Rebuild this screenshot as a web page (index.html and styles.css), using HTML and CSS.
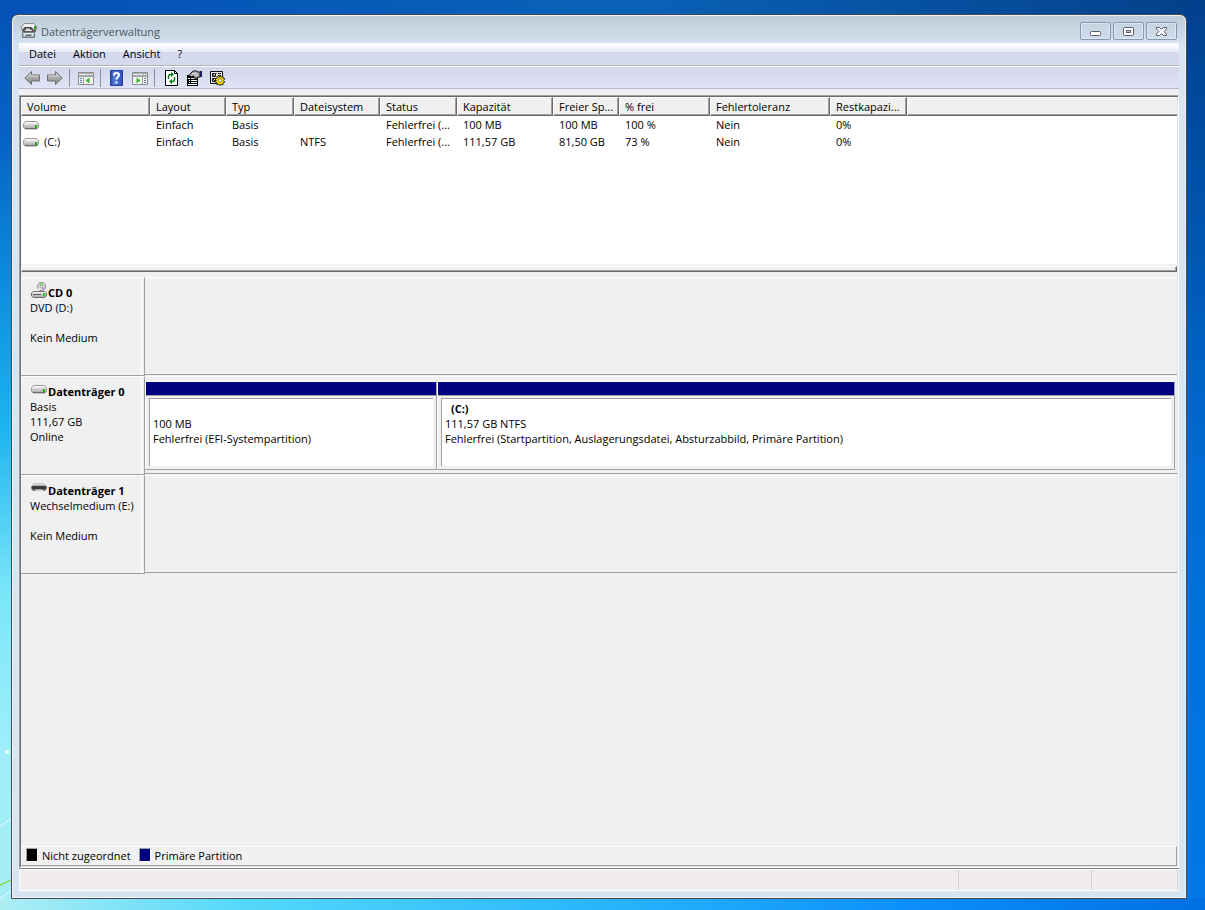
FILE: index.html
```html
<!DOCTYPE html>
<html lang="de">
<head>
    <meta charset="UTF-8">
    <meta name="viewport" content="width=device-width, initial-scale=1.0">
    <title>Datenträgerverwaltung</title>
    <link rel="stylesheet" href="styles.css">
</head>
<body>
    <svg class="defs" aria-hidden="true">
        <defs>
            <linearGradient id="metal" x1="0" y1="0" x2="0" y2="1">
                <stop offset="0" stop-color="#fafafa"/>
                <stop offset="1" stop-color="#a4a4a4"/>
            </linearGradient>
            <linearGradient id="arrow" x1="0" y1="0" x2="0" y2="1">
                <stop offset="0" stop-color="#c4c4c4"/>
                <stop offset="1" stop-color="#8c8c8c"/>
            </linearGradient>
            <linearGradient id="help" x1="0" y1="0" x2="1" y2="0">
                <stop offset="0" stop-color="#24409c"/>
                <stop offset=".3" stop-color="#5a7ed8"/>
                <stop offset="1" stop-color="#2c50bc"/>
            </linearGradient>
            <symbol id="drive" viewBox="0 0 16 16">
                <path d="M2.500 4.500h11l2 2v4l-2 1.500h-11l-2-1.500v-4z" fill="url(#metal)" stroke="#999"/>
                <path d="M3 5h10l1.500 1.500h-13z" fill="#f4f4f4"/>
                <path d="M2 11.500h12" stroke="#6c6c6c"/>
                <path d="M12 8h2v3h-2z" fill="#2aa822"/>
            </symbol>
            <symbol id="cd" viewBox="0 0 16 16">
                <circle cx="10.500" cy="4.500" r="4.200" fill="#d0d0d0" stroke="#8a8a8a" stroke-width=".8"/>
                <path d="M10.500 4.500l-2-4h3z" fill="#7cc878"/>
                <path d="M10.500 4.500l4 2-3 2z" fill="#b8a4d0"/>
                <path d="M10.500 4.500l-3.500 2 1.500 2z" fill="#f6f6f6"/>
                <circle cx="10.500" cy="4.500" r="1.200" fill="#fff" stroke="#777" stroke-width=".6"/>
                <path d="M2.500 9.500h11l2 1.500v3l-2 1.500h-11l-2-1.500v-3z" fill="url(#metal)" stroke="#6e6e6e"/>
                <path d="M2 12.500h8" stroke="#555"/>
                <path d="M12 11h2v3h-2z" fill="#2fc024"/>
            </symbol>
            <symbol id="removable" viewBox="0 0 16 16">
                <path d="M3 3.500h10l3 3v2.500l-2 2h-2l-1-2h-6l-1 2h-2l-2-2v-2.500z" fill="#8b8b8b"/>
                <path d="M3 3.500h10l2 2h-14z" fill="#d6d6d6"/>
                <path d="M2 6h12l1.500 1.500-1 2h-13l-1-2z" fill="#3a3a3a"/>
                <path d="M4 10.500l1-1.500h6l1 1.500z" fill="#a8a8a8"/>
            </symbol>
            <symbol id="app" viewBox="0 0 16 16">
                <path d="M2.500 1.500l1-1h9l2 1.500 1 2v2.500h-15v-2.500z" fill="#eee" stroke="#8a8a8a"/>
                <path d="M2 5.500l2-1.500h6l2 1.500v1h-10z" fill="#444"/>
                <path d="M5 5.500h4v1.500h-4z" fill="#ddd"/>
                <path d="M13 3h2v3h-2z" fill="#23a81e"/>
                <path d="M1 7h14v1l-1 1h-12l-1-1z" fill="#5a5a5a"/>
                <path d="M4 7.500h7" stroke="#d8d8d8"/>
                <path d="M1.500 9.500h12v5h-12z" fill="#a4b0b4" stroke="#707c80"/>
                <path d="M2 10.500h11M3.500 10v3M11.500 10v3" stroke="#e4eaec"/>
                <path d="M5 12.500h5" stroke="#566064"/>
            </symbol>
            <symbol id="left" viewBox="0 0 16 16">
                <path d="M.8 8l6.700-6.500v3.500h8v6h-8v3.500z" fill="url(#arrow)" stroke="#6e6e6e"/>
                <path d="M2.500 8l4-4v2h8" fill="none" stroke="#d4d4d4"/>
            </symbol>
            <symbol id="right" viewBox="0 0 16 16">
                <path d="M15.200 8l-6.700-6.500v3.500h-8v6h8v3.500z" fill="url(#arrow)" stroke="#6e6e6e"/>
                <path d="M1.500 6h8v-2l4 4" fill="none" stroke="#d4d4d4"/>
            </symbol>
            <symbol id="tree" viewBox="0 0 16 16">
                <path d="M.5 2.500h15v12h-15z" fill="#f4f4f4" stroke="#8c8c8c"/>
                <path d="M1 3h14v3h-14z" fill="#a9aeb4"/>
                <path d="M1 4.500h10" stroke="#e4e6e8"/>
                <path d="M12 4.500h1M14 4.500h1" stroke="#fff"/>
                <path d="M5.500 6v8M1 6.500h14" stroke="#a0a0a0"/>
                <path d="M2 8.500h2M2 10.500h2M2 12.500h2" stroke="#5b7ea8"/>
                <path d="M11.500 7.500v6l-4-3z" fill="#3cb428"/>
            </symbol>
            <symbol id="actions" viewBox="0 0 16 16">
                <path d="M.5 2.500h15v12h-15z" fill="#f4f4f4" stroke="#8c8c8c"/>
                <path d="M1 3h14v3h-14z" fill="#a9aeb4"/>
                <path d="M1 4.500h10" stroke="#e4e6e8"/>
                <path d="M12 4.500h1M14 4.500h1" stroke="#fff"/>
                <path d="M10.500 6v8M1 6.500h14" stroke="#a0a0a0"/>
                <path d="M12 8.500h2M12 10.500h2M12 12.500h2" stroke="#5b7ea8"/>
                <path d="M4.500 7.500v6l4-3z" fill="#3cb428"/>
            </symbol>
            <symbol id="question" viewBox="0 0 16 16">
                <path d="M1.500 .5h12v15h-12z" fill="url(#help)" stroke="#24409c"/>
                <path d="M5 5.500v-1q0-1.500 2.500-1.500t2.500 2c0 2-2.500 2-2.500 4.500" fill="none" stroke="#fff" stroke-width="2"/>
                <path d="M6.500 11.500h2v2h-2z" fill="#fff"/>
            </symbol>
            <symbol id="refresh" viewBox="0 0 16 16">
                <path d="M2.500 .5h9l3 3v12h-12z" fill="#fff" stroke="#000"/>
                <path d="M11.500 .5v3h3" fill="none" stroke="#000"/>
                <path d="M5.500 9v-3l1-1.500h2M11.500 7v3l-1 1.500h-2" fill="none" stroke="#0a7d14" stroke-width="1.500"/>
                <path d="M8 2l3 2.500-3 2.500zM9 9l-3 2.500 3 2.500z" fill="#0a7d14"/>
            </symbol>
            <symbol id="properties" viewBox="0 0 16 16">
                <path d="M1 5h11v11h-11z" fill="#000"/>
                <path d="M2 8.500h2M5 8.500h6M3 10.500h1M5 10.500h6M3 12.500h1M5 12.500h6M2 14.500h9" stroke="#fff"/>
                <path d="M3 5.500l3-3.500 1.500-1h3l1.500 1h2v5h-2l-2 1.500-2-.5v-2l-3 1z" fill="#a8a8a8" stroke="#111"/>
                <path d="M6 3.500h5M8 5.500h4" stroke="#d8d8d8"/>
                <path d="M14 1h2v6h-2z" fill="#17205c"/>
            </symbol>
            <symbol id="settings" viewBox="0 0 16 16">
                <path d="M1.500 1.500h12v12h-12z" fill="#e8e8e8" stroke="#111"/>
                <path d="M3.500 3.500h3v3h-3zM3.500 8.500h3v3h-3z" fill="#fff" stroke="#111"/>
                <path d="M4 4l1.500 2 2-3M4 9l1.500 2 2-3" fill="none" stroke="#111"/>
                <path d="M9 3.500h3M9 5.500h3" stroke="#111"/>
                <path d="M11 5.500l1 2 2-1.500v2.500h2l-1.500 2 1.500 1.500-2 .5v2.500l-2-1-1 1.700-1-1.700-2 1v-2.500l-2.200-.5 1.500-1.500-1.500-2h2.200v-2.500l2 1.500z" fill="#ffe800" stroke="#1a1600" stroke-width=".8"/>
                <circle cx="11" cy="10.500" r="1.700" fill="#fff" stroke="#6c5c00" stroke-width=".8"/>
            </symbol>
        </defs>
    </svg>

    <div class="window">
        <header class="titlebar">
            <svg class="icon"><use href="#app"/></svg>
            <h1 class="title">Datenträgerverwaltung</h1>
            <div class="caption">
                <button type="button" class="caption-btn" aria-label="Minimieren">
                    <svg viewBox="0 0 13 11"><rect x="1.500" y="5.500" width="10" height="4" rx="1" fill="#fff" stroke="#5a5f70"/></svg>
                </button>
                <button type="button" class="caption-btn" aria-label="Maximieren">
                    <svg viewBox="0 0 13 11"><rect x="1.500" y="1.500" width="10" height="8" rx="1" fill="#fff" stroke="#5a5f70"/><rect x="4.500" y="4.500" width="4" height="2" fill="#c3d0e0" stroke="#5a5f70"/></svg>
                </button>
                <button type="button" class="caption-btn" aria-label="Schließen">
                    <svg viewBox="0 0 13 11"><path d="M1.500 1.500h3l2 2 2-2h3v1.500l-2.500 2.500 2.500 2.500v1.500h-3l-2-2-2 2h-3v-1.500l2.500-2.500-2.500-2.500z" fill="#fff" stroke="#5a5f70"/></svg>
                </button>
            </div>
        </header>

        <nav class="menubar">
            <button type="button">Datei</button>
            <button type="button">Aktion</button>
            <button type="button">Ansicht</button>
            <button type="button">?</button>
        </nav>

        <div class="toolbar">
            <button type="button" aria-label="Zurück"><svg class="icon"><use href="#left"/></svg></button>
            <button type="button" aria-label="Vorwärts"><svg class="icon"><use href="#right"/></svg></button>
            <span class="separator"></span>
            <button type="button" aria-label="Konsolenstruktur"><svg class="icon"><use href="#tree"/></svg></button>
            <span class="separator"></span>
            <button type="button" aria-label="Hilfe"><svg class="icon"><use href="#question"/></svg></button>
            <button type="button" aria-label="Aktionsbereich"><svg class="icon"><use href="#actions"/></svg></button>
            <span class="separator"></span>
            <button type="button" aria-label="Aktualisieren"><svg class="icon"><use href="#refresh"/></svg></button>
            <button type="button" aria-label="Eigenschaften"><svg class="icon"><use href="#properties"/></svg></button>
            <button type="button" aria-label="Einstellungen"><svg class="icon"><use href="#settings"/></svg></button>
        </div>

        <main class="pane">
            <div class="volume-list">
                <table class="volumes">
                    <colgroup>
                        <col class="col-volume">
                        <col class="col-layout">
                        <col class="col-type">
                        <col class="col-fs">
                        <col class="col-status">
                        <col class="col-capacity">
                        <col class="col-free">
                        <col class="col-percent">
                        <col class="col-fault">
                        <col class="col-rest">
                        <col>
                    </colgroup>
                    <thead>
                        <tr>
                            <th>Volume</th>
                            <th>Layout</th>
                            <th>Typ</th>
                            <th>Dateisystem</th>
                            <th>Status</th>
                            <th>Kapazität</th>
                            <th>Freier Sp...</th>
                            <th>% frei</th>
                            <th>Fehlertoleranz</th>
                            <th>Restkapazi...</th>
                            <th></th>
                        </tr>
                    </thead>
                    <tbody>
                        <tr>
                            <td><span class="volume"><svg class="icon"><use href="#drive"/></svg></span></td>
                            <td>Einfach</td>
                            <td>Basis</td>
                            <td></td>
                            <td>Fehlerfrei (...</td>
                            <td>100 MB</td>
                            <td>100 MB</td>
                            <td>100 %</td>
                            <td>Nein</td>
                            <td>0%</td>
                            <td></td>
                        </tr>
                        <tr>
                            <td><span class="volume"><svg class="icon"><use href="#drive"/></svg>(C:)</span></td>
                            <td>Einfach</td>
                            <td>Basis</td>
                            <td>NTFS</td>
                            <td>Fehlerfrei (...</td>
                            <td>111,57 GB</td>
                            <td>81,50 GB</td>
                            <td>73 %</td>
                            <td>Nein</td>
                            <td>0%</td>
                            <td></td>
                        </tr>
                    </tbody>
                </table>
            </div>
            <div class="splitter"></div>

            <div class="disks">
                <section class="disk">
                    <div class="disk-label">
                        <h2><svg class="icon"><use href="#cd"/></svg>CD 0</h2>
                        <p>DVD (D:)</p>
                        <p></p>
                        <p>Kein Medium</p>
                    </div>
                    <div class="disk-map"></div>
                </section>
                <section class="disk">
                    <div class="disk-label">
                        <h2><svg class="icon"><use href="#drive"/></svg>Datenträger 0</h2>
                        <p>Basis</p>
                        <p>111,67 GB</p>
                        <p>Online</p>
                    </div>
                    <div class="disk-map">
                        <div class="partition">
                            <div class="stripe"></div>
                            <div class="partition-body">
                                <h3></h3>
                                <p>100 MB</p>
                                <p>Fehlerfrei (EFI-Systempartition)</p>
                            </div>
                        </div>
                        <div class="partition">
                            <div class="stripe"></div>
                            <div class="partition-body">
                                <h3>(C:)</h3>
                                <p>111,57 GB NTFS</p>
                                <p>Fehlerfrei (Startpartition, Auslagerungsdatei, Absturzabbild, Primäre Partition)</p>
                            </div>
                        </div>
                    </div>
                </section>
                <section class="disk">
                    <div class="disk-label">
                        <h2><svg class="icon"><use href="#removable"/></svg>Datenträger 1</h2>
                        <p>Wechselmedium (E:)</p>
                        <p></p>
                        <p>Kein Medium</p>
                    </div>
                    <div class="disk-map"></div>
                </section>
            </div>

            <div class="legend">
                <span class="legend-item"><i class="swatch unallocated"></i>Nicht zugeordnet</span>
                <span class="legend-item"><i class="swatch primary"></i>Primäre Partition</span>
            </div>
        </main>

        <footer class="statusbar">
            <span></span>
            <span></span>
            <span></span>
        </footer>
    </div>
</body>
</html>
```
FILE: styles.css
```css
* {
    margin: 0;
    padding: 0;
    box-sizing: border-box;
}

body {
    height: 100vh;
    padding: 14px 18px 11px 11px;
    display: flex;
    font-family: "Segoe UI", "Open Sans", "Noto Sans", sans-serif;
    font-size: 11px;
    line-height: 15px;
    color: #000;
    overflow: hidden;
    /* green blade and light streaks, bottom glow, left glow, base */
    background:
        linear-gradient(155deg, transparent 48%, #8fd84a 49%, #8fd84a 54%, transparent 55%) 0 872px / 12px 20px no-repeat,
        linear-gradient(145deg, transparent 48%, #e8fdff 50%, transparent 56%) 0 812px / 12px 20px no-repeat,
        linear-gradient(145deg, transparent 48%, #e8fdff 50%, transparent 56%) 0 884px / 12px 20px no-repeat,
        radial-gradient(circle, #fff 1px, transparent 3px) 2px 747px / 10px 10px no-repeat,
        linear-gradient(to right, #aeeef4, #54d8fa 20%, #30bcfc 45%, #0c90fa 75%, #0070e0) bottom / 100% 12px no-repeat,
        linear-gradient(#0452b8, #0662c4 15%, #0a8ade 30%, #1cb5ee 47%, #7ae6f8 65%, #9eeefa 82%, #a8ecf4) left / 12px 100% no-repeat,
        linear-gradient(#02408c, #0157b4 28%, #006cd4 52%, #0074e0 80%, #0078e6) right / 20px 100% no-repeat,
        linear-gradient(to right, #0452b8, #0a62b8 52%, #04408a);
}

button {
    border: none;
    background: none;
    font: inherit;
    color: inherit;
}

.defs {
    position: absolute;
    width: 0;
    height: 0;
}

.icon {
    display: block;
    width: 16px;
    height: 16px;
    flex: none;
}

/* Window frame */
.window {
    flex: 1;
    min-width: 0;
    display: flex;
    flex-direction: column;
    padding: 0 7px 7px;
    border: 1px solid #46484c;
    border-radius: 7px 7px 0 0;
    background: linear-gradient(#bccbd8, #d7e4f1 32px);
    box-shadow: inset 0 0 0 1px #eef4fa;
}

.titlebar {
    flex: none;
    height: 28px;
    display: flex;
    align-items: center;
    gap: 4px;
    padding: 4px 2px 0;
}

.title {
    flex: 1;
    font-size: 11px;
    font-weight: normal;
    color: #4c5560;
}

.caption {
    display: flex;
    gap: 2px;
}

.caption-btn {
    width: 31px;
    height: 18px;
    display: flex;
    align-items: center;
    justify-content: center;
    border: 1px solid #8496b0;
    border-radius: 2px;
    background: linear-gradient(#c5d3e1, #cfdcea);
    box-shadow: inset 0 0 0 1px #dce7f2;
}

.caption-btn svg {
    width: 13px;
    height: 11px;
}

/* Menu and toolbar */
.menubar {
    flex: none;
    height: 23px;
    display: flex;
    gap: 1px;
    padding-left: 2px;
    background: linear-gradient(#fff, #e6ebf5 9px, #d4d9ed 9px);
    border-bottom: 1px solid #b0b3ba;
}

.menubar button {
    padding: 0 8px 2px;
}

.toolbar {
    flex: none;
    height: 23px;
    display: flex;
    padding-left: 2px;
    background: linear-gradient(#d1d6ea, #e0e4f5);
    border-top: 1px solid #fff;
    border-bottom: 1px solid #b2b7cc;
}

.toolbar button {
    display: flex;
    padding: 3px 4px 2px 3px;
}

.separator {
    width: 8px;
    height: 18px;
    margin-top: 2px;
    background: linear-gradient(#8d8f98, #8d8f98) 2px 0 / 1px 100% no-repeat;
}

/* Sunken client area */
.pane {
    flex: 1;
    min-height: 0;
    display: flex;
    flex-direction: column;
    background: #f0f0f0;
    border: 1px solid;
    border-color: #a0a0a0 #fff #fff #a0a0a0;
    box-shadow: inset 1px 1px #696969, inset -1px -1px #e3e3e3, 0 -6px #f0f0f0;
    padding: 1px;
    margin-top: 6px;
}

.volume-list {
    flex: none;
    height: 167px;
    background: #fff;
    overflow: hidden;
}

.volumes {
    width: 100%;
    table-layout: fixed;
    border-collapse: separate;
    border-spacing: 0;
    white-space: nowrap;
}

.volumes th {
    height: 19px;
    padding: 0 0 0 5px;
    text-align: left;
    font-weight: normal;
    background: #f0f0f0;
    border: 1px solid;
    border-color: #fff #696969 #696969 #fff;
    box-shadow: inset -1px -1px #a0a0a0;
}

.volumes th:last-child {
    border-right: none;
    box-shadow: inset 0 -1px #a0a0a0;
}

.volumes td {
    height: 17px;
    padding: 0 0 0 6px;
    overflow: hidden;
}

.volumes td:first-child {
    padding-left: 2px;
}

.volume {
    display: flex;
    gap: 5px;
    height: 16px;
}

.col-volume { width: 129px; }
.col-layout { width: 76px; }
.col-type { width: 68px; }
.col-fs { width: 86px; }
.col-status { width: 77px; }
.col-capacity { width: 96px; }
.col-free { width: 66px; }
.col-percent { width: 91px; }
.col-fault { width: 120px; }
.col-rest { width: 77px; }

.splitter {
    flex: none;
    height: 6px;
    margin-top: 2px;
    border: 1px solid;
    border-color: #fff #696969 #696969 #fff;
    box-shadow: inset -1px -1px #a0a0a0;
}

/* Graphical disk view */
.disks {
    flex: 1;
    min-height: 0;
    padding-top: 5px;
}

.disk {
    display: flex;
    height: 99px;
}

.disk-label {
    flex: none;
    width: 124px;
    padding: 7px 10px 0 9px;
    border-top: 1px solid #fff;
    border-bottom: 1px solid #a0a0a0;
    border-right: 1px solid #a0a0a0;
    box-shadow: inset -2px 0 #f0f0f0, inset -3px 0 #fff, inset 1px 0 #fff;
    white-space: nowrap;
    overflow: hidden;
}

.disk-label p {
    height: 15px;
    overflow: hidden;
}

.disk-label h2 {
    display: flex;
    height: 15px;
    align-items: center;
    font-size: 11px;
    font-weight: bold;
}

.disk-label .icon {
    margin: -5px 1px 0;
}

.disk-map {
    flex: 1;
    min-width: 0;
    display: grid;
    grid-template-columns: 292fr 738fr;
    padding: 4px 2px 3px 0;
    margin-bottom: 1px;
    border-top: 1px solid #fff;
    border-bottom: 1px solid #a0a0a0;
}

.partition {
    min-width: 0;
    display: flex;
    flex-direction: column;
    border: 1px solid;
    border-color: #fff #a0a0a0 #a0a0a0 #fff;
}

.stripe {
    height: 14px;
    background: #000080;
    border-bottom: 1px solid #a0a0a0;
}

.partition-body {
    flex: 1;
    margin: 2px 3px 3px;
    padding: 2px 3px;
    background: #fff;
    border-top: 1px solid #a0a0a0;
    border-left: 1px solid #a0a0a0;
    white-space: nowrap;
    overflow: hidden;
}

.partition-body h3 {
    height: 15px;
    padding-left: 6px;
    font-size: 11px;
    font-weight: bold;
}

.legend {
    flex: none;
    height: 20px;
    display: flex;
    align-items: center;
    gap: 8px;
    padding: 0 0 2px 4px;
    border: 1px solid;
    border-color: #fff #a0a0a0 #a0a0a0 #fff;
}

.legend-item {
    display: flex;
    align-items: center;
    gap: 4px;
}

.swatch {
    width: 12px;
    height: 14px;
    border: 1px solid;
    border-color: #a0a0a0 #fff #fff #a0a0a0;
}

.unallocated {
    background: #000;
}

.primary {
    background: #000080;
}

.statusbar {
    flex: none;
    height: 23px;
    display: grid;
    grid-template-columns: 1fr 133px 86px;
    padding-right: 1px;
    background: #f1edec;
    border-top: 1px solid #808080;
    border-bottom: 1px solid #fff;
    box-shadow: inset 0 1px #fff, inset 1px 0 #fff;
}

.statusbar span {
    margin-top: 1px;
    border-right: 1px solid #d4d2d2;
}
```
